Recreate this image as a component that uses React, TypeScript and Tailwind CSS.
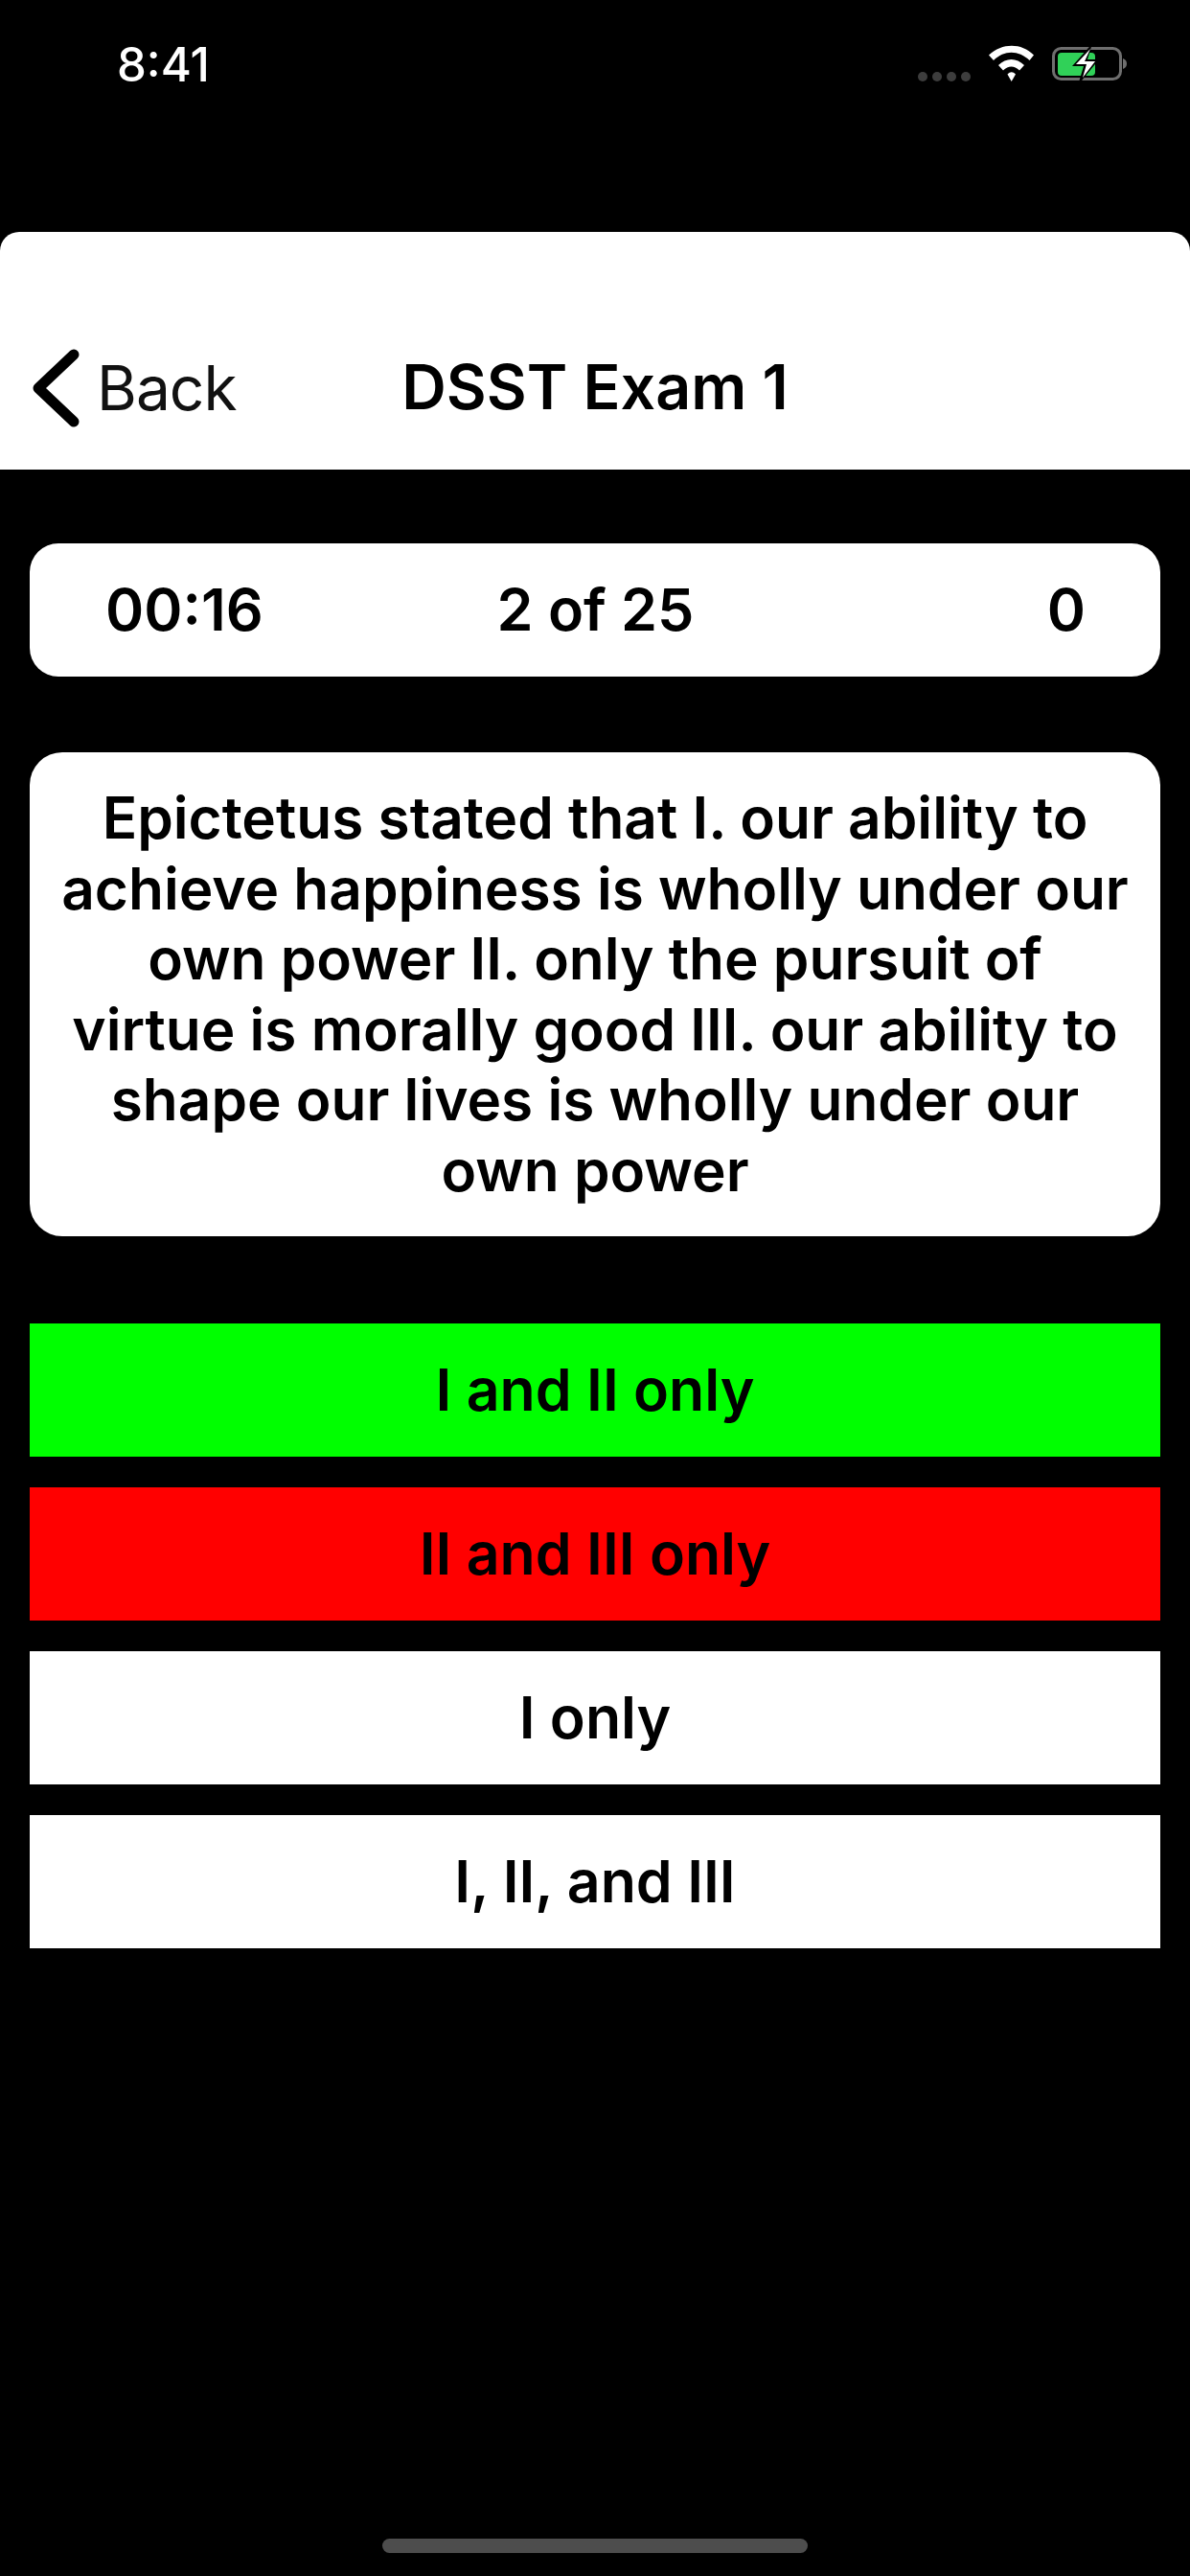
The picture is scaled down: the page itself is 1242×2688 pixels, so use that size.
const answers = [
  { label: "I and II only", bg: "bg-[#00ff00]" },
  { label: "II and III only", bg: "bg-[#ff0000]" },
  { label: "I only", bg: "bg-white" },
  { label: "I, II, and III", bg: "bg-white" },
];

function StatusIcons() {
  return (
    <svg width="230" height="50" viewBox="0 0 230 50" className="mt-[45px]">
      <g fill="#3d3d3d">
        <circle cx="13" cy="35" r="5" />
        <circle cx="28" cy="35" r="5" />
        <circle cx="43" cy="35" r="5" />
        <circle cx="58" cy="35" r="5" />
      </g>
      <g fill="#fff">
        <path d="M82 12.5 C96 -0.5 116 -0.5 129 12.5 L124.500 18 C113 7 98 7 87 18 Z" />
        <path d="M92 23 C100 15 111 15 119 23 L114 28.500 C108.500 23 102.500 23 97 28.500 Z" />
        <path d="M101.500 32.500 C104.500 29.500 107 29.500 110 32.500 L105.700 40 Z" />
      </g>
      <rect x="149.500" y="5.500" width="70" height="32" rx="8" fill="none" stroke="#6e6e6e" strokeWidth="3" />
      <path d="M222 16 C225 17 226 19 226 21.500 C226 24 225 26 222 27 Z" fill="#6e6e6e" />
      <rect x="154" y="10" width="39" height="24" rx="4" fill="#30d158" />
      <path d="M190 0.500 L169 24 L181 24 L175 44 L197 17 L185 17 Z" fill="#000" />
      <path d="M188 6 L173 22 L184 22 L180 36 L193 19 L182 19 Z" fill="#fff" />
    </svg>
  );
}

export default function App() {
  return (
    <div className="relative flex h-[2688px] w-[1242px] flex-col overflow-hidden bg-black font-['Inter',sans-serif] text-black">
      <div className="flex h-[242px] items-start justify-between pl-[122px] pr-[62px] text-white">
        <span className="mt-[38px] text-[49px] font-medium leading-[60px]">8:41</span>
        <StatusIcons />
      </div>

      <header className="relative flex h-[248px] items-end rounded-t-[20px] bg-white pb-[43px]">
        <div className="flex items-center pl-[34px]">
          <svg width="50" height="84" viewBox="0 0 50 84" fill="none">
            <path d="M43 7 L6 42 L43 77" stroke="#000" strokeWidth="11" strokeLinecap="round" strokeLinejoin="round" />
          </svg>
          <span className="ml-[17px] text-[64px] leading-[80px] tracking-[-1px] text-[#111]">Back</span>
        </div>
        <h1 className="absolute inset-x-0 bottom-[46px] text-center text-[64.500px] font-semibold leading-[80px]">DSST Exam 1</h1>
      </header>

      <main className="flex flex-col px-[31px]">
        <div className="mt-[77px] grid h-[139px] grid-cols-[1fr_auto_1fr] items-center rounded-[30px] bg-white pl-[79px] pr-[78px] text-[61px] font-semibold">
          <span className="text-left">00:16</span>
          <span>2 of 25</span>
          <span className="text-right">0</span>
        </div>

        <div className="mt-[79px] flex h-[505px] items-center justify-center rounded-[34px] bg-white px-[20px] text-center text-[60.300px] font-semibold leading-[73.500px]">
          <p>
            Epictetus stated that I. our ability to
            <br />
            achieve happiness is wholly under our
            <br />
            own power II. only the pursuit of
            <br />
            virtue is morally good III. our ability to
            <br />
            shape our lives is wholly under our
            <br />
            own power
          </p>
        </div>

        <div className="mt-[91px] flex flex-col gap-[32px]">
          {answers.map((a) => (
            <div key={a.label} className={`flex h-[139px] items-center justify-center text-[60.800px] font-semibold ${a.bg}`}>
              {a.label}
            </div>
          ))}
        </div>
      </main>

      <div className="absolute bottom-[24px] left-[399px] h-[15px] w-[444px] rounded-full bg-[#4d4d4d]" />
    </div>
  );
}
